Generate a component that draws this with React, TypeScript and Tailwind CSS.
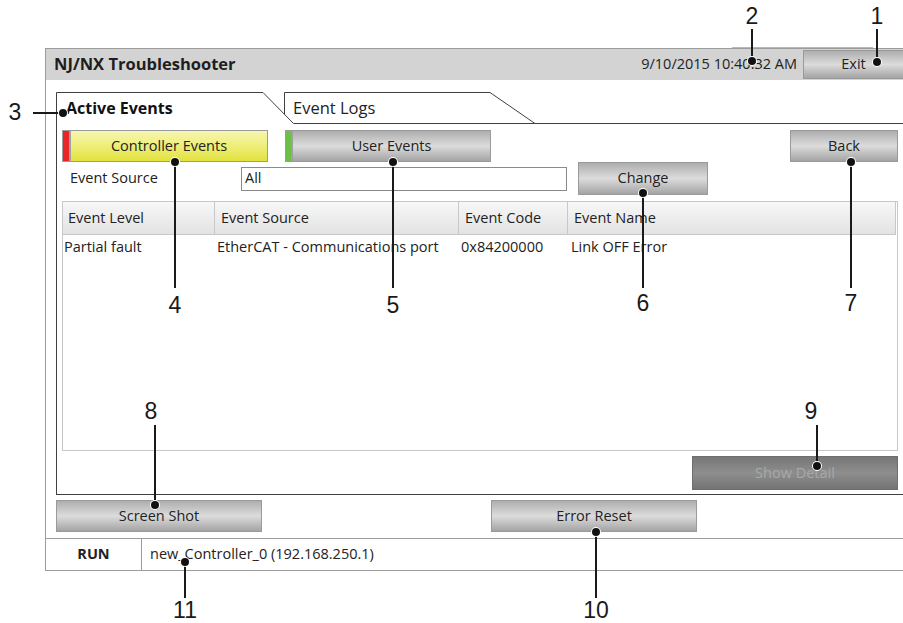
import React from "react";

const grayBtn =
  "flex items-center justify-center border border-[#9a9a9a] bg-linear-to-b from-[#aeaeae] via-[#dcdcdc] to-[#a4a4a4] text-[#222] text-[14.5px] leading-none";

function VLine({ c }: { c: string }) {
  return <div className={`absolute w-[2px] bg-[#1a1a1a] ${c}`} />;
}
function Dot({ c }: { c: string }) {
  return (
    <div
      className={`absolute w-[8px] h-[8px] -translate-x-1/2 -translate-y-1/2 rounded-full bg-[#111] ring-1 ring-white ${c}`}
    />
  );
}
function Num({ c, t }: { c: string; t: string }) {
  return (
    <div
      className={`absolute -translate-x-1/2 text-[23px] leading-[23px] text-[#1a1a1a] font-['Liberation_Sans',Arial,sans-serif] ${c}`}
    >
      {t}
    </div>
  );
}

export default function App() {
  return (
    <div className="relative w-[903px] h-[623px] overflow-hidden bg-white font-['Open_Sans','Noto_Sans',sans-serif] text-[14.5px] leading-none text-[#222]">
      <div className="pt-[48px] pl-[45px]">
        {/* window */}
        <div className="w-[858px] border-l border-t border-b border-[#9c9c9c]">
          {/* title bar */}
          <div className="flex h-[31px] items-center bg-[#d3d3d3]">
            <div className="flex-1 pl-[8px] text-[16.5px] font-bold leading-none text-[#1e1e1e]">
              NJ/NX Troubleshooter
            </div>
            <div className="mr-[6px] text-[14.5px] leading-none">9/10/2015 10:40:32 AM</div>
            <div className={`${grayBtn} w-[100px] h-[29px] border-r-0`}>Exit</div>
          </div>

          {/* body */}
          <div className="pl-[10px] pt-[12px]">
            {/* tab strip */}
            <div className="relative h-[32px]">
              <svg
                className="absolute left-0 top-0"
                width="850"
                height="32"
                viewBox="0 0 850 32"
              >
                <path
                  d="M228.5 23 V0.5 H434 L479 31.5"
                  fill="white"
                  stroke="#404040"
                  strokeWidth="1"
                />
                <path
                  d="M0.5 32 V0.5 H207 L237.5 31.5 H850"
                  fill="white"
                  stroke="#404040"
                  strokeWidth="1"
                />
              </svg>
              <div className="relative flex h-full items-center">
                <div className="ml-[10px] w-[227px] text-[16px] font-bold leading-none text-[#111]">
                  Active Events
                </div>
                <div className="text-[16.5px] leading-none">Event Logs</div>
              </div>
            </div>

            {/* panel */}
            <div className="border-l border-b border-[#404040] pl-[5px] pr-[5px] pt-[6px] pb-[4px]">
              <div className="flex h-[32px]">
                <div className="flex w-[206px] border border-[#9a9a9a]">
                  <div className="w-[8px] bg-[#e8262a] border-r-2 border-[#a0a0a0]" />
                  <div className="flex flex-1 items-center justify-center bg-linear-to-b from-[#f6f6b0] via-[#eeee78] to-[#e2e23a]">
                    Controller Events
                  </div>
                </div>
                <div className="ml-[17px] flex w-[206px] border border-[#9a9a9a]">
                  <div className="w-[7px] bg-[#6cbf46] border-r-2 border-[#a0a0a0]" />
                  <div className="flex flex-1 items-center justify-center bg-linear-to-b from-[#aeaeae] via-[#dcdcdc] to-[#a4a4a4]">
                    User Events
                  </div>
                </div>
                <div className="flex-1" />
                <div className={`${grayBtn} w-[108px]`}>Back</div>
              </div>

              <div className="flex h-[33px] items-center">
                <div className="ml-[8px] w-[171px]">Event Source</div>
                <div className="flex h-[24px] w-[326px] items-center border border-[#8a8a8a] pl-[3px]">
                  All
                </div>
                <div className={`${grayBtn} ml-[11px] h-[33px] w-[130px]`}>Change</div>
              </div>

              {/* table */}
              <div className="mt-[6px] h-[250px] border border-[#c8c8c8]">
                <div className="flex h-[33px] border-b border-[#c8c8c8] bg-linear-to-b from-[#f7f7f7] to-[#e3e3e3] mr-[1px]">
                  <div className="flex w-[152px] items-center border-r border-[#c8c8c8] pl-[5px]">
                    Event Level
                  </div>
                  <div className="flex w-[244px] items-center border-r border-[#c8c8c8] pl-[6px]">
                    Event Source
                  </div>
                  <div className="flex w-[109px] items-center border-r border-[#c8c8c8] pl-[6px]">
                    Event Code
                  </div>
                  <div className="flex flex-1 items-center border-r border-[#c8c8c8] pl-[6px]">
                    Event Name
                  </div>
                </div>
                <div className="flex h-[24px] items-center">
                  <div className="w-[152px] pl-[1px]">Partial fault</div>
                  <div className="w-[244px] pl-[2px]">EtherCAT - Communications port</div>
                  <div className="w-[109px] pl-[2px]">0x84200000</div>
                  <div className="flex-1 pl-[3px]">Link OFF Error</div>
                </div>
              </div>

              <div className="mt-[5px] flex h-[34px] justify-end">
                <div className="flex w-[206px] items-center justify-center border border-[#6e6e6e] bg-linear-to-b from-[#777777] via-[#8e8e8e] to-[#747474] text-[#a9a9a9]">
                  Show Detail
                </div>
              </div>
            </div>

            {/* bottom buttons */}
            <div className="mt-[5px] flex h-[32px]">
              <div className={`${grayBtn} w-[206px]`}>Screen Shot</div>
              <div className={`${grayBtn} ml-[229px] w-[206px]`}>Error Reset</div>
            </div>
          </div>

          {/* status bar */}
          <div className="mt-[6px] flex h-[32px] border-t border-[#9c9c9c]">
            <div className="flex w-[96px] items-center justify-center border-r border-[#9c9c9c] font-bold">
              RUN
            </div>
            <div className="flex items-center pl-[8px]">new_Controller_0 (192.168.250.1)</div>
          </div>
        </div>
      </div>

      {/* light highlight above title bar */}
      <div className="absolute left-[732px] top-[47px] h-[1px] w-[141px] bg-[#8fc4e6]" />

      {/* callouts */}
      <Num c="left-[877px] top-[5px]" t="1" />
      <VLine c="left-[876px] top-[29px] h-[33px]" />
      <Dot c="left-[877px] top-[62px]" />

      <Num c="left-[752px] top-[5px]" t="2" />
      <VLine c="left-[751px] top-[29px] h-[32px]" />
      <Dot c="left-[752px] top-[61px]" />

      <Num c="left-[15px] top-[101px]" t="3" />
      <div className="absolute left-[33px] top-[112px] h-[2px] w-[30px] bg-[#1a1a1a]" />
      <Dot c="left-[63px] top-[113px]" />

      <Num c="left-[175px] top-[294px]" t="4" />
      <VLine c="left-[174px] top-[162px] h-[126px]" />
      <Dot c="left-[175px] top-[162px]" />

      <Num c="left-[393px] top-[294px]" t="5" />
      <VLine c="left-[392px] top-[162px] h-[126px]" />
      <Dot c="left-[393px] top-[162px]" />

      <Num c="left-[643px] top-[292px]" t="6" />
      <VLine c="left-[642px] top-[193px] h-[95px]" />
      <Dot c="left-[643px] top-[193px]" />

      <Num c="left-[851px] top-[292px]" t="7" />
      <VLine c="left-[850px] top-[162px] h-[126px]" />
      <Dot c="left-[851px] top-[162px]" />

      <Num c="left-[151px] top-[400px]" t="8" />
      <VLine c="left-[154px] top-[425px] h-[80px]" />
      <Dot c="left-[155px] top-[505px]" />

      <Num c="left-[811px] top-[400px]" t="9" />
      <VLine c="left-[816px] top-[425px] h-[41px]" />
      <Dot c="left-[817px] top-[466px]" />

      <Num c="left-[596px] top-[599px]" t="10" />
      <VLine c="left-[595px] top-[532px] h-[66px]" />
      <Dot c="left-[596px] top-[532px]" />

      <Num c="left-[185px] top-[599px]" t="11" />
      <VLine c="left-[184px] top-[562px] h-[36px]" />
      <Dot c="left-[185px] top-[562px]" />
    </div>
  );
}
